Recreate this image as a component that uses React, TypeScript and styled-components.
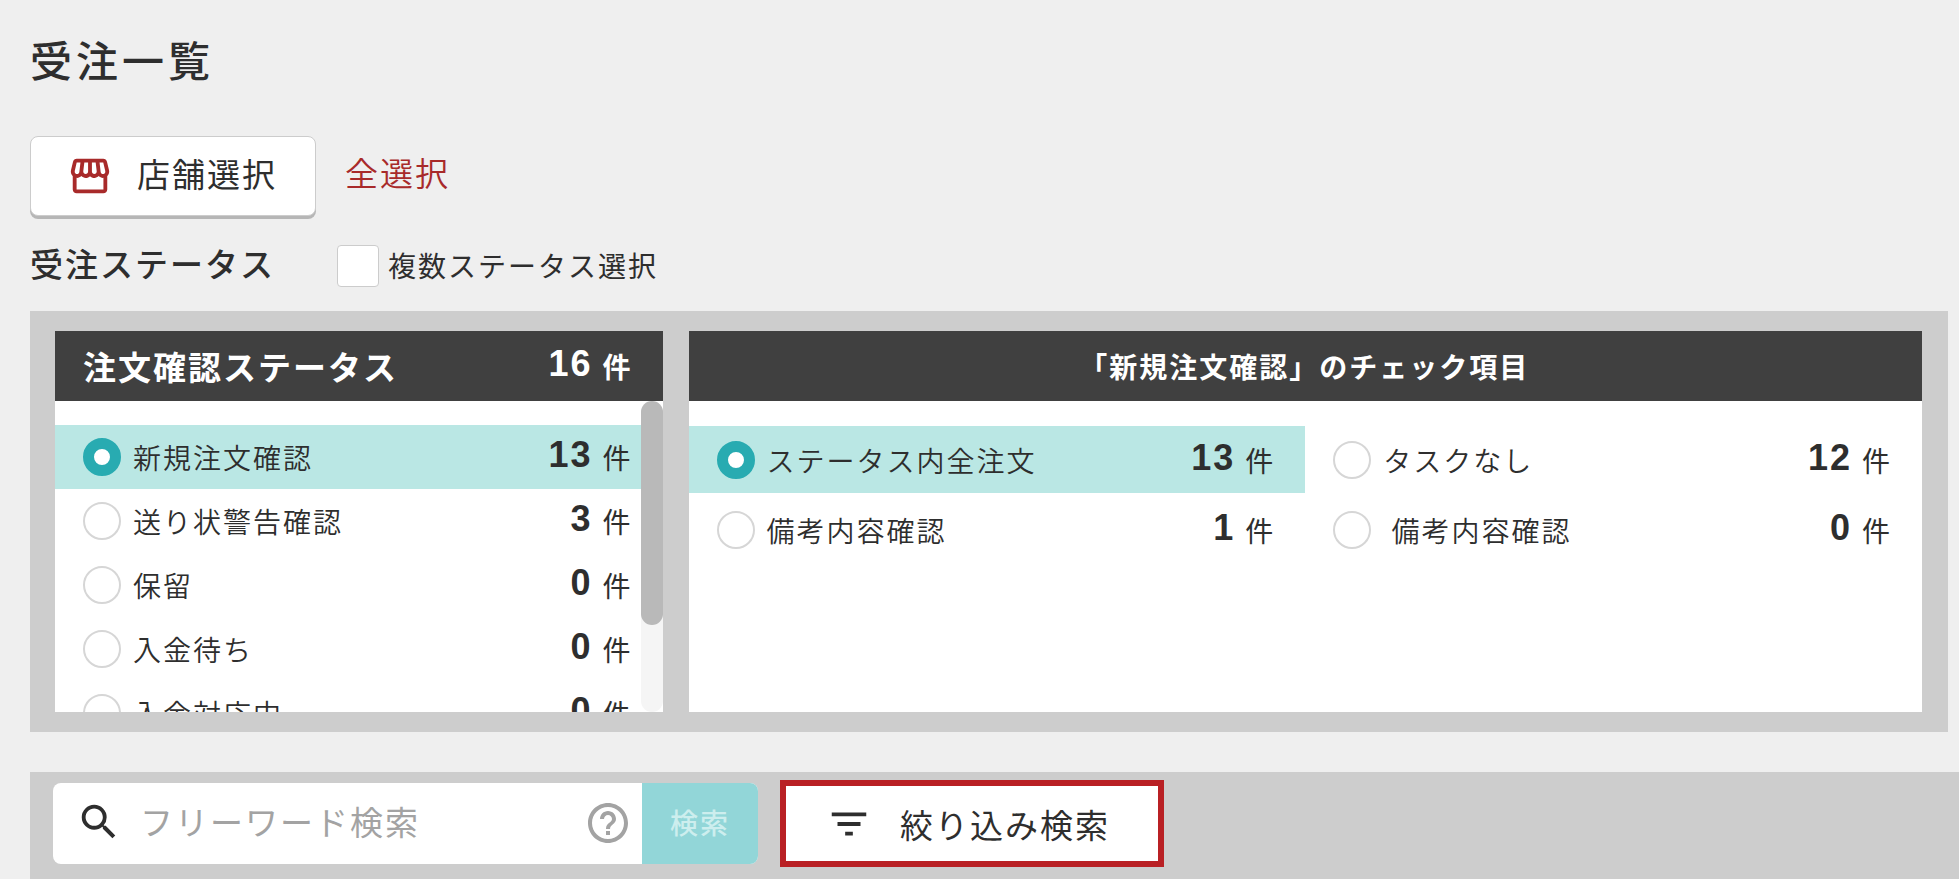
import React, { useState } from "react";
import styled, { createGlobalStyle, css } from "styled-components";
import {
  MdFilterList,
  MdHelpOutline,
  MdOutlineStorefront,
  MdSearch,
} from "react-icons/md";

const color = {
  page: "#efefef",
  panel: "#cdcdcd",
  head: "#404040",
  text: "#2e2e2e",
  teal: "#28abb1",
  tealPale: "#bae7e4",
  tealMuted: "#92d6d8",
  red: "#a82a2a",
  frame: "#b92024",
  line: "#cccccc",
  hint: "#a3a3a3",
};

const textLarge = css`
  font-size: 33px;
  letter-spacing: 2px;
  line-height: 40px;
`;

const textBase = css`
  font-size: 28px;
  letter-spacing: 2px;
  line-height: 40px;
`;

const GlobalStyle = createGlobalStyle`
  *, *::before, *::after { box-sizing: border-box; }
  body {
    margin: 0;
    background: ${color.page};
    color: ${color.text};
    font-family: "Noto Sans CJK JP", "Liberation Sans", sans-serif;
  }
  button, input { font: inherit; color: inherit; }
  h1, h2, h3, ul { margin: 0; padding: 0; }
  ul { list-style: none; }
`;

const Page = styled.main`
  display: flex;
  flex-direction: column;
  min-height: 100vh;
  padding: 30px 0 0 30px;
`;

const Title = styled.h1`
  font-size: 42px;
  font-weight: 500;
  letter-spacing: 4px;
  line-height: 58px;
`;

const StoreRow = styled.div`
  display: flex;
  align-items: flex-start;
  gap: 29px;
  margin-top: 48px;
`;

const StoreButton = styled.button`
  ${textLarge}
  display: flex;
  align-items: flex-start;
  gap: 24px;
  height: 80px;
  padding: 16px 38px 16px 36px;
  border: 1px solid ${color.line};
  border-radius: 8px;
  background: #fff;
  box-shadow: 0 3px 0 #b6b6b6;
  cursor: pointer;

  svg {
    color: ${color.red};
  }
`;

const SelectAll = styled.a`
  ${textLarge}
  margin-top: 16px;
  color: ${color.red};
  font-weight: 350;
  text-decoration: none;
`;

const StatusRow = styled.div`
  display: flex;
  align-items: flex-start;
  gap: 62px;
  margin-top: 29px;
`;

const StatusHeading = styled.h2`
  ${textLarge}
  line-height: 36px;
  font-weight: 500;
`;

const CheckLabel = styled.label`
  ${textBase}
  display: flex;
  align-items: flex-start;
  gap: 9px;
`;

const CheckBox = styled.input`
  appearance: none;
  width: 42px;
  height: 42px;
  margin: 0;
  border: 1px solid ${color.line};
  border-radius: 4px;
  background: #fff;

  &:checked {
    background: ${color.teal};
  }
`;

const StatusPanel = styled.section`
  display: grid;
  grid-template-columns: 33fr 67fr;
  gap: 26px;
  margin: 24px 11px 0 0;
  padding: 20px 26px 20px 25px;
  background: ${color.panel};
`;

const Card = styled.div`
  display: flex;
  flex-direction: column;
  min-width: 0;
  background: #fff;
`;

const CardHead = styled.div<{ $centered?: boolean }>`
  display: flex;
  align-items: center;
  justify-content: ${(p) => (p.$centered ? "center" : "space-between")};
  height: 70px;
  padding: 0 30px 0 28px;
  background: ${color.head};
  color: #fff;
`;

const CardTitle = styled.h3<{ $large?: boolean }>`
  ${(p) => (p.$large ? textLarge : textBase)}
  font-weight: 700;
`;

const ScrollBody = styled.div`
  display: flex;
  height: 311px;
`;

const StatusList = styled.ul`
  flex: 1;
  padding: 24px 0;
  overflow-y: auto;
  scrollbar-width: none;
`;

const ScrollTrack = styled.div`
  width: 22px;
  border-radius: 11px;
  background: #f5f5f5;
`;

const ScrollThumb = styled.div`
  height: 72%;
  border-radius: 11px;
  background: #b9b9b9;
`;

const CheckGrid = styled.ul`
  display: grid;
  grid-template-columns: 1fr 1fr;
  row-gap: 3px;
  padding: 25px 0;
`;

const Option = styled.label<{ $active: boolean; $inset?: boolean }>`
  ${textBase}
  display: flex;
  align-items: center;
  gap: 12px;
  height: ${(p) => (p.$inset ? 67 : 64)}px;
  padding: 0 ${(p) => (p.$inset ? 30 : 8)}px 0 28px;
  background: ${(p) => (p.$active ? color.tealPale : "transparent")};
  cursor: pointer;
`;

const Radio = styled.input`
  appearance: none;
  flex: none;
  width: 38px;
  height: 38px;
  margin: 0;
  border: 2px solid #d6d6d6;
  border-radius: 50%;
  background: #fff;

  &:checked {
    border: 11px solid ${color.teal};
  }
`;

const OptionName = styled.span`
  flex: 1;
  font-weight: 350;
  white-space: nowrap;
`;

const CountText = styled.span<{ $bold?: boolean }>`
  ${textBase}
  display: flex;
  align-items: flex-start;
  gap: 10px;
  font-weight: ${(p) => (p.$bold ? 700 : 400)};
`;

const CountNumber = styled.b`
  font-family: "Liberation Sans", Arial, sans-serif;
  font-size: 36px;
  font-weight: 700;
  letter-spacing: 2px;
  line-height: 36px;
`;

const SearchBar = styled.form`
  display: flex;
  flex: 1;
  align-items: flex-start;
  gap: 22px;
  margin-top: 40px;
  padding: 8px 23px;
  background: ${color.panel};
`;

const SearchBox = styled.div`
  display: flex;
  height: 81px;
  margin-top: 3px;
  border-radius: 8px;
  background: #fff;
  overflow: hidden;
`;

const SearchField = styled.label`
  display: flex;
  align-items: flex-start;
  width: 589px;
  padding: 16px 10px 0 23px;
`;

const SearchInput = styled.input`
  ${textLarge}
  flex: 1;
  min-width: 0;
  height: 44px;
  margin: 0 0 0 18px;
  padding: 0;
  border: 0;
  outline: 0;
  background: transparent;

  &::placeholder {
    color: ${color.hint};
    opacity: 1;
  }
`;

const SearchButton = styled.button`
  ${textBase}
  width: 116px;
  padding: 0 0 4px;
  border: 0;
  background: ${color.tealMuted};
  color: #cdeeee;
  font-weight: 500;
`;

const FilterButton = styled.button`
  ${textLarge}
  display: flex;
  align-items: center;
  gap: 28px;
  height: 87px;
  padding: 0 48px 0 40px;
  border: 6px solid ${color.frame};
  background: #fff;
  cursor: pointer;
`;

const Count = ({ value, bold }: { value: number; bold?: boolean }) => (
  <CountText $bold={bold}>
    <CountNumber>{value}</CountNumber>件
  </CountText>
);

const statuses = [
  { name: "新規注文確認", count: 13 },
  { name: "送り状警告確認", count: 3 },
  { name: "保留", count: 0 },
  { name: "入金待ち", count: 0 },
  { name: "入金対応中", count: 0 },
];

const checks = [
  { name: "ステータス内全注文", count: 13 },
  { name: "タスクなし", count: 12 },
  { name: "備考内容確認", count: 1 },
  { name: "\u00a0備考内容確認", count: 0 },
];

export default function App() {
  const [status, setStatus] = useState(0);
  const [check, setCheck] = useState(0);

  return (
    <>
      <GlobalStyle />
      <Page lang="ja">
        <Title>受注一覧</Title>

        <StoreRow>
          <StoreButton type="button">
            <MdOutlineStorefront size={46} aria-hidden />
            店舗選択
          </StoreButton>
          <SelectAll href="#all">全選択</SelectAll>
        </StoreRow>

        <StatusRow>
          <StatusHeading>受注ステータス</StatusHeading>
          <CheckLabel>
            <CheckBox type="checkbox" />
            複数ステータス選択
          </CheckLabel>
        </StatusRow>

        <StatusPanel>
          <Card>
            <CardHead>
              <CardTitle $large>注文確認ステータス</CardTitle>
              <Count value={16} bold />
            </CardHead>
            <ScrollBody>
              <StatusList>
                {statuses.map((item, i) => (
                  <li key={item.name}>
                    <Option $active={status === i}>
                      <Radio
                        type="radio"
                        name="status"
                        checked={status === i}
                        onChange={() => setStatus(i)}
                      />
                      <OptionName>{item.name}</OptionName>
                      <Count value={item.count} />
                    </Option>
                  </li>
                ))}
              </StatusList>
              <ScrollTrack>
                <ScrollThumb />
              </ScrollTrack>
            </ScrollBody>
          </Card>

          <Card>
            <CardHead $centered>
              <CardTitle>「新規注文確認」のチェック項目</CardTitle>
            </CardHead>
            <CheckGrid>
              {checks.map((item, i) => (
                <li key={item.name}>
                  <Option $active={check === i} $inset>
                    <Radio
                      type="radio"
                      name="check"
                      checked={check === i}
                      onChange={() => setCheck(i)}
                    />
                    <OptionName>{item.name}</OptionName>
                    <Count value={item.count} />
                  </Option>
                </li>
              ))}
            </CheckGrid>
          </Card>
        </StatusPanel>

        <SearchBar onSubmit={(e) => e.preventDefault()}>
          <SearchBox>
            <SearchField>
              <MdSearch size={46} aria-hidden />
              <SearchInput
                type="text"
                placeholder="フリーワード検索"
                aria-label="フリーワード検索"
              />
              <MdHelpOutline size={48} color={color.hint} aria-hidden />
            </SearchField>
            <SearchButton type="submit">検索</SearchButton>
          </SearchBox>
          <FilterButton type="button">
            <MdFilterList size={46} aria-hidden />
            絞り込み検索
          </FilterButton>
        </SearchBar>
      </Page>
    </>
  );
}
